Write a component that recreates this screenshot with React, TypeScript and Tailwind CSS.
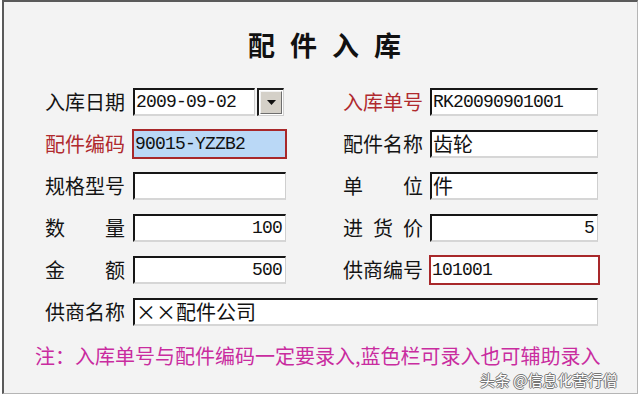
import React from "react";

const CJK = "font-['Noto_Sans_CJK_SC','Noto_Sans',sans-serif]";
const MONO = "font-['Liberation_Mono','Noto_Sans_CJK_SC',monospace]";

function Label({ text, red }: { text: string; red?: boolean }) {
  const chars = Array.from(text);
  return (
    <div
      className={`w-[80px] flex justify-between text-[20px] leading-none ${CJK} ${
        red ? "text-[#b02a2e]" : "text-[#141414]"
      }`}
    >
      {chars.map((c, i) => (
        <span key={i}>{c}</span>
      ))}
    </div>
  );
}

function Field({
  value,
  w,
  right,
  cjk,
  red,
  blue,
}: {
  value?: string;
  w: string;
  right?: boolean;
  cjk?: boolean;
  red?: boolean;
  blue?: boolean;
}) {
  const border = red
    ? "border-2 border-[#a8282a] h-[30px]"
    : "border-t-2 border-l-2 border-t-[#161616] border-l-[#161616] border-r border-b-2 border-r-[#cfcfcf] border-b-[#d6d6d6] h-[28px]";
  return (
    <div
      className={`${w} ${border} ${blue ? "bg-[#bad8f6]" : "bg-white"} flex items-center ${
        right ? "justify-end pr-[3px]" : "pl-[1px]"
      } overflow-hidden`}
    >
      <span
        className={`${
          cjk ? `${CJK} text-[20px]` : `${MONO} text-[18px] tracking-[-0.8px]`
        } leading-none text-[#111] whitespace-nowrap`}
      >
        {value}
      </span>
    </div>
  );
}

function Row({ children }: { children: React.ReactNode }) {
  return <div className="flex items-center h-[28px] pl-[41px]">{children}</div>;
}

function Left({ children }: { children: React.ReactNode }) {
  return <div className="w-[298px] flex items-center shrink-0">{children}</div>;
}

function Right({ children }: { children: React.ReactNode }) {
  return <div className="flex items-center">{children}</div>;
}

export default function App() {
  return (
    <div className="relative w-[640px] h-[396px] bg-white pl-[2px] pr-[2px] pb-[2px] overflow-hidden">
      <div className="h-full bg-[#f3f3f3] border-l-2 border-t-2 border-l-[#5a5a5a] border-t-[#5a5a5a] border-r border-b border-r-[#b5b5b5] border-b-[#b5b5b5] flex flex-col">
        <div
          className={`pt-[29px] pl-[244px] text-[27px] leading-none font-bold tracking-[15px] text-[#111] ${CJK}`}
        >
          配件入库
        </div>

        <div className="mt-[30px] flex flex-col gap-[14px]">
          <Row>
            <Left>
              <Label text="入库日期" />
              <div className="ml-[8px] flex items-center gap-[2px]">
                <Field value="2009-09-02" w="w-[122px]" />
                <div className="w-[27px] h-[28px] border-t-2 border-l-2 border-[#1c1c1c] border-r border-b border-r-[#cfcfcf] border-b-[#cfcfcf] bg-white p-[1px] flex">
                  <div className="flex-1 bg-[#d4d0c8] border border-t-[#f2f2f2] border-l-[#f2f2f2] border-r-[#6e6e6e] border-b-[#6e6e6e] flex items-center justify-center">
                    <svg width="9" height="5" viewBox="0 0 9 5">
                      <path d="M0 0 H9 L4.5 5 Z" fill="#111" />
                    </svg>
                  </div>
                </div>
              </div>
            </Left>
            <Right>
              <Label text="入库单号" red />
              <div className="ml-[7px]">
                <Field value="RK20090901001" w="w-[168px]" />
              </div>
            </Right>
          </Row>

          <Row>
            <Left>
              <Label text="配件编码" red />
              <div className="ml-[7px]">
                <Field value="90015-YZZB2" w="w-[155px]" red blue />
              </div>
            </Left>
            <Right>
              <Label text="配件名称" />
              <div className="ml-[7px]">
                <Field value="齿轮" w="w-[168px]" cjk />
              </div>
            </Right>
          </Row>

          <Row>
            <Left>
              <Label text="规格型号" />
              <div className="ml-[8px]">
                <Field value="" w="w-[153px]" />
              </div>
            </Left>
            <Right>
              <Label text="单位" />
              <div className="ml-[7px]">
                <Field value="件" w="w-[168px]" cjk />
              </div>
            </Right>
          </Row>

          <Row>
            <Left>
              <Label text="数量" />
              <div className="ml-[8px]">
                <Field value="100" w="w-[153px]" right />
              </div>
            </Left>
            <Right>
              <Label text="进货价" />
              <div className="ml-[7px]">
                <Field value="5" w="w-[168px]" right />
              </div>
            </Right>
          </Row>

          <Row>
            <Left>
              <Label text="金额" />
              <div className="ml-[8px]">
                <Field value="500" w="w-[153px]" right />
              </div>
            </Left>
            <Right>
              <Label text="供商编号" />
              <div className="ml-[6px]">
                <Field value="101001" w="w-[171px]" red />
              </div>
            </Right>
          </Row>

          <Row>
            <Label text="供商名称" />
            <div className="ml-[8px]">
              <Field value="××配件公司" w="w-[465px]" cjk />
            </div>
          </Row>
        </div>

        <div
          className={`mt-[20px] pl-[31px] text-[20px] leading-none text-[#c92c9f] whitespace-nowrap ${CJK}`}
        >
          注：入库单号与配件编码一定要录入,蓝色栏可录入也可辅助录入
        </div>
      </div>

      <div
        className={`absolute left-[480px] top-[372px] text-[15px] leading-none text-white whitespace-nowrap ${CJK} [text-shadow:1px_0_0_#777,-1px_0_0_#777,0_1px_0_#777,0_-1px_0_#777]`}
      >
        头条 @信息化苦行僧
      </div>
    </div>
  );
}
